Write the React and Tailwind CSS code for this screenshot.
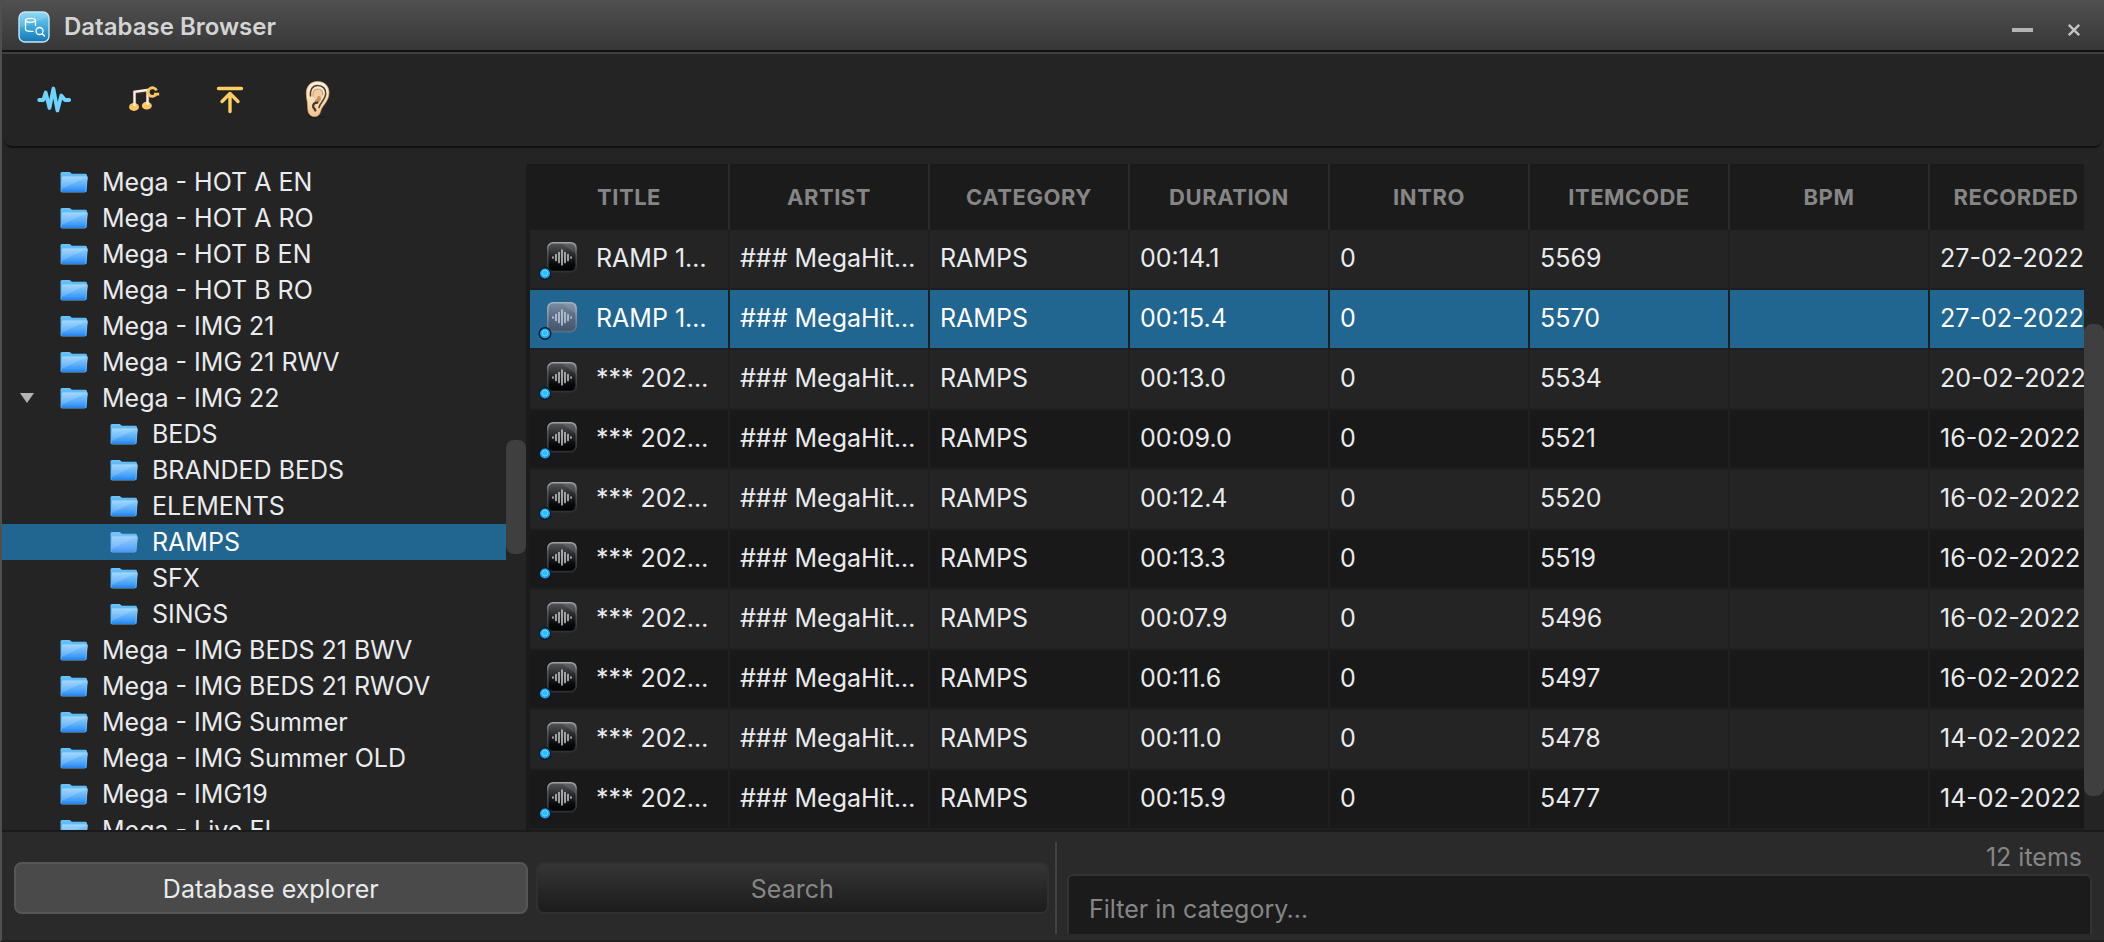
import { useState } from "react";

const folders = [
  { name: "Mega - HOT A EN" },
  { name: "Mega - HOT A RO" },
  { name: "Mega - HOT B EN" },
  { name: "Mega - HOT B RO" },
  { name: "Mega - IMG 21" },
  { name: "Mega - IMG 21 RWV" },
  { name: "Mega - IMG 22", open: true },
  { name: "BEDS", child: true },
  { name: "BRANDED BEDS", child: true },
  { name: "ELEMENTS", child: true },
  { name: "RAMPS", child: true },
  { name: "SFX", child: true },
  { name: "SINGS", child: true },
  { name: "Mega - IMG BEDS 21 BWV" },
  { name: "Mega - IMG BEDS 21 RWOV" },
  { name: "Mega - IMG Summer" },
  { name: "Mega - IMG Summer OLD" },
  { name: "Mega - IMG19" },
  { name: "Mega - Live EL" },
];

const columns = [
  "TITLE",
  "ARTIST",
  "CATEGORY",
  "DURATION",
  "INTRO",
  "ITEMCODE",
  "BPM",
  "RECORDED",
];

const items = [
  { title: "RAMP 1…", duration: "00:14.1", code: "5569", recorded: "27-02-2022" },
  { title: "RAMP 1…", duration: "00:15.4", code: "5570", recorded: "27-02-2022" },
  { title: "*** 202…", duration: "00:13.0", code: "5534", recorded: "20-02-2022" },
  { title: "*** 202…", duration: "00:09.0", code: "5521", recorded: "16-02-2022" },
  { title: "*** 202…", duration: "00:12.4", code: "5520", recorded: "16-02-2022" },
  { title: "*** 202…", duration: "00:13.3", code: "5519", recorded: "16-02-2022" },
  { title: "*** 202…", duration: "00:07.9", code: "5496", recorded: "16-02-2022" },
  { title: "*** 202…", duration: "00:11.6", code: "5497", recorded: "16-02-2022" },
  { title: "*** 202…", duration: "00:11.0", code: "5478", recorded: "14-02-2022" },
  { title: "*** 202…", duration: "00:15.9", code: "5477", recorded: "14-02-2022" },
];

const Gradients = () => (
  <svg className="absolute size-0" aria-hidden="true">
    <defs>
      <linearGradient id="appBg" x1="0" y1="0" x2="0" y2="1">
        <stop offset="0" stopColor="#7fd3f7" />
        <stop offset="0.5" stopColor="#3fa9dc" />
        <stop offset="1" stopColor="#1577b4" />
      </linearGradient>
      <linearGradient id="folderBack" x1="0" y1="0" x2="0" y2="1">
        <stop offset="0" stopColor="#6cc6fb" />
        <stop offset="1" stopColor="#1580e6" />
      </linearGradient>
      <linearGradient id="folderFront" x1="0" y1="0" x2="0" y2="1">
        <stop offset="0" stopColor="#8fd0fb" />
        <stop offset="0.5" stopColor="#5db0fa" />
        <stop offset="0.85" stopColor="#3795f6" />
        <stop offset="1" stopColor="#0f72dc" />
      </linearGradient>
      <linearGradient id="tile" x1="0" y1="0" x2="0" y2="1">
        <stop offset="0" stopColor="#55565a" />
        <stop offset="0.45" stopColor="#242527" />
        <stop offset="0.75" stopColor="#08090a" />
        <stop offset="1" stopColor="#030303" />
      </linearGradient>
      <linearGradient id="tileOn" x1="0" y1="0" x2="0" y2="1">
        <stop offset="0" stopColor="#7b8a9f" />
        <stop offset="0.5" stopColor="#586a80" />
        <stop offset="1" stopColor="#42536a" />
      </linearGradient>
      <linearGradient id="tileEdge" x1="0" y1="0" x2="0" y2="1">
        <stop offset="0" stopColor="#a3a4a8" />
        <stop offset="0.3" stopColor="#55565a" />
        <stop offset="1" stopColor="#303134" />
      </linearGradient>
      <linearGradient id="tileOnEdge" x1="0" y1="0" x2="0" y2="1">
        <stop offset="0" stopColor="#a4b0c0" />
        <stop offset="1" stopColor="#5c6d84" />
      </linearGradient>
      <linearGradient id="earSkin" x1="0" y1="0" x2="0" y2="1">
        <stop offset="0" stopColor="#fdf1de" />
        <stop offset="0.5" stopColor="#fbdfba" />
        <stop offset="1" stopColor="#f3c28f" />
      </linearGradient>
    </defs>
  </svg>
);

const AppIcon = () => (
  <svg className="size-8" viewBox="0 0 32 32" fill="none" aria-hidden="true">
    <rect x="1" y="1" width="30" height="30" rx="6" fill="url(#appBg)" stroke="#c3e6f6" strokeWidth="1.4" />
    <path d="M2 17 30 6V7a5 5 0 0 0-5-5H7a5 5 0 0 0-5 5z" fill="#fff" fillOpacity="0.14" />
    <g stroke="#fff" strokeWidth="1.3" strokeLinecap="round">
      <ellipse cx="12.5" cy="9.3" rx="5" ry="2" />
      <path d="M7.5 9.300v9c0 1.200 2.200 2 5 2h2.500M17.500 9.300v5.200" />
      <circle cx="21.500" cy="20" r="3.500" />
      <path d="m24.200 22.700 2.300 2.300" />
    </g>
  </svg>
);

const FolderIcon = ({ active }) => (
  <svg className="h-6 w-7 shrink-0" viewBox="0 0 28 24" aria-hidden="true">
    <path d="M.5 3.500A1.500 1.500 0 0 1 2 2h7.500c1 0 1.500 1.800 3 1.800h13a1.500 1.500 0 0 1 1.500 1.500v15.200a1.500 1.500 0 0 1-1.500 1.500H2a1.500 1.500 0 0 1-1.500-1.500z" fill="url(#folderBack)" />
    <path d="M3 6.500h23.600a1 1 0 0 1 1 1.200l-1.800 13.300a1.400 1.400 0 0 1-1.400 1.200H2.200A1.300 1.300 0 0 1 1 20.800L2 7.400a1 1 0 0 1 1-.9z" fill="url(#folderFront)" stroke="#a5dcfb" strokeOpacity="0.6" strokeWidth="0.7" />
    <path d="M2.300 7h24L2 19z" fill="#fff" fillOpacity="0.16" />
    {active && <path d="M1 3h8l3 2h15l-2 17H1z" fill="#a9c6ff" fillOpacity="0.3" />}
  </svg>
);

const TrackIcon = ({ active }) => (
  <svg className="size-11 shrink-0" viewBox="0 0 44 44" aria-hidden="true">
    <rect
      x="11.800"
      y="5.800"
      width="28.400"
      height="28.800"
      rx="5.500"
      fill={active ? "url(#tileOn)" : "url(#tile)"}
      stroke={active ? "url(#tileOnEdge)" : "url(#tileEdge)"}
      strokeWidth="1.600"
    />
    <path d="M26 6.500 40 6.500V17z" fill="#fff" fillOpacity="0.1" />
    <g stroke={active ? "#b9c6d6" : "#b9babd"} strokeWidth="1.700" strokeLinecap="round">
      <path d="M17 20v1M20 17.500v6M23 15.500v10M26 13.200v14.600M29 15.500v10M32 17.500v6M35 20v1" />
    </g>
    <circle cx="9" cy="36.500" r="6.500" fill="#0d1a26" />
    <circle cx="9" cy="36.500" r="5" fill="#1fa2f6" />
    <circle cx="9" cy="36" r="3" fill="#29c0fd" stroke="#6fd8ff" strokeWidth="0.900" />
  </svg>
);

const WaveIcon = () => (
  <svg className="size-10" viewBox="0 0 40 40" fill="none" stroke="#6fd3ff" strokeWidth="3.800" strokeLinecap="round" strokeLinejoin="round" aria-hidden="true">
    <path d="M5.200 20H9.300l2.400-7.500 3.800 15.500L19.400 8.500l4 22 3.900-15 3.700 4.500h4.200" />
  </svg>
);

const MusicIcon = () => (
  <svg className="size-10" viewBox="2 0 40 40" fill="none" aria-hidden="true">
    <path d="M14.500 26V12.500L28 10.800V25" stroke="#7a3f22" strokeWidth="3.600" strokeOpacity="0.500" />
    <ellipse cx="14" cy="27" rx="5" ry="3.900" fill="#fdc65f" />
    <ellipse cx="26.800" cy="25.700" rx="5" ry="3.900" fill="#fdc65f" />
    <path d="M14.500 26V11.800L27.500 10V25" stroke="#f6efe9" strokeWidth="2.400" />
    <path d="M36.500 10.500a4.300 4.300 0 1 0-.6 4.200M34 14.200h5.200" stroke="#fdc65f" strokeWidth="2.800" />
  </svg>
);

const UploadIcon = () => (
  <svg className="size-10" viewBox="0 0 40 40" fill="none" stroke="#ffcd62" strokeWidth="3.400" strokeLinecap="round" strokeLinejoin="round" aria-hidden="true">
    <path d="M8.500 8.500h23M20 31.500V14M12 21.500l8-8 8 8" />
  </svg>
);

const EarIcon = () => (
  <svg className="size-10" viewBox="0 0 40 40" fill="none" aria-hidden="true">
    <ellipse cx="19" cy="37" rx="9" ry="1.500" fill="#1f1f1f" />
    <path d="M19.500 1.500C12 1.500 8 7 8.300 14c.2 5 1.300 7.500 1.300 11.500 0 5 .6 11 7 11 4.500 0 5.400-3 6.400-6.500C24.500 25.500 31 21 31 12.500c0-6.500-4.500-11-11.500-11z" fill="url(#earSkin)" stroke="#dba877" strokeWidth="0.700" />
    <path d="M12.500 16c-.8-6 2-10.500 7-10.500 5.500 0 8.500 3.500 8.200 8.500-.4 6-5.700 8.500-6.700 13.500" stroke="#51402f" strokeWidth="1.500" strokeLinecap="round" />
    <path d="M15.500 17c-.9-5 .5-8.200 4-8.200 4 0 5.700 2.500 5.300 6-.5 4-4.300 5.200-5.800 9.200" fill="#f1cda2" />
    <path d="M15 16.500c-.6-4.500 1-7.500 4.500-7.500 4 0 5.500 2.500 5.200 5.700" stroke="#c99e70" strokeWidth="1.100" strokeLinecap="round" />
    <path d="M20 16c3.500-.5 4 4 1 6-1-2-2.800-1-4.500.5 0-2.500 2.500-3 3.500-6.500z" fill="#c6925d" />
    <path d="M19.500 22.500c-3 0-5 2-4.200 4.700.5 1.500 2 2 2 3.300" stroke="#43362a" strokeWidth="2.300" strokeLinecap="round" />
  </svg>
);

const toolbar = [
  { label: "Edit audio", Icon: WaveIcon },
  { label: "Edit item", Icon: MusicIcon },
  { label: "Insert on top", Icon: UploadIcon },
  { label: "Prelisten", Icon: EarIcon },
];

// top and size are fractions of the track
const Scrollbar = ({ top, size }) => (
  <div className="relative w-5 shrink-0">
    <div
      className="absolute inset-x-0 rounded-lg bg-[#3f3f3f]"
      style={{ top: `${top * 100}%`, height: `${size * 100}%` }}
    />
  </div>
);

const cellClass = "h-[60px] border-r-2 border-b-2 border-[#1f1f1f] px-[10px] pb-0.5 whitespace-nowrap";

const App = () => {
  const [folder, setFolder] = useState("RAMPS");
  const [selected, setSelected] = useState(1);
  const [filter, setFilter] = useState("");

  return (
    <div className="flex h-screen flex-col overflow-hidden border-b-2 border-l-2 border-b-[#222222] border-l-[#4f4f4f] bg-[#242424] font-['Inter',sans-serif] text-[25px] leading-9 text-[#e9ebee]">
      <Gradients />

      <header className="flex h-[54px] shrink-0 items-center border-b-2 border-[#3f3f3f] bg-[#121212] pb-0.5">
        <div className="flex h-full w-full items-center bg-linear-to-b from-[#505050] to-[#373737] pt-1 pl-4">
          <AppIcon />
          <h1 className="ml-3.5 text-2xl font-semibold text-[#d4d4d4]">Database Browser</h1>
          <button type="button" aria-label="Minimise" className="ml-auto flex h-10 w-10 items-center justify-center">
            <span className="mt-1.5 h-1 w-[21px] bg-[#b4b4b4]" />
          </button>
          <button type="button" aria-label="Close" className="mr-2.5 ml-3 flex h-10 w-10 items-center justify-center">
            <svg className="mt-1.5 size-3" viewBox="0 0 12 12" stroke="#c4c4c4" strokeWidth="2.400" aria-hidden="true">
              <path d="M.8.8l10.400 10.400M11.200.8.8 11.200" />
            </svg>
          </button>
        </div>
      </header>

      <div className="mx-0.5 flex h-[94px] shrink-0 rounded-b-lg border-b-2 border-[#121212] pl-1.5">
        {toolbar.map(({ label, Icon }) => (
          <button
            key={label}
            type="button"
            aria-label={label}
            className="flex w-[88px] items-center justify-center"
          >
            <Icon />
          </button>
        ))}
      </div>

      <main className="flex min-h-0 flex-1 border-b-2 border-[#1a1a1a] pt-4">
        <ul className="w-1/4 max-w-[504px] shrink-0 grow overflow-hidden">
          {folders.map(({ name, child, open }) => (
            <li key={name}>
              <button
                type="button"
                onClick={() => setFolder(name)}
                className={`flex h-9 w-full items-center text-left ${
                  child ? "pl-[108px]" : open ? "pl-[18px]" : "pl-[58px]"
                } ${folder === name ? "bg-[#206690] text-white" : ""}`}
              >
                {open && (
                  <svg className="mr-[26px] h-[10px] w-[14px]" viewBox="0 0 14 10" fill="#b4b4b4" aria-hidden="true">
                    <path d="M0 0h14L7 10z" />
                  </svg>
                )}
                <FolderIcon active={folder === name} />
                <span className="ml-3.5 whitespace-nowrap">{name}</span>
              </button>
            </li>
          ))}
        </ul>
        <Scrollbar top={0.414} size={0.171} />

        <div className="min-w-0 flex-1 overflow-hidden bg-[#1b1b1b] pl-1">
          <table className="w-[1574px] table-fixed border-separate border-spacing-0">
            <colgroup>
              {columns.map((column) => (
                <col key={column} className={column === "RECORDED" ? "w-[174px]" : "w-[200px]"} />
              ))}
            </colgroup>
            <thead>
              <tr>
                {columns.map((column) => (
                  <th
                    key={column}
                    className="h-[66px] border-r-2 border-[#2a2a2a] text-center text-[22px] font-bold tracking-wide text-[#868686]"
                  >
                    {column}
                  </th>
                ))}
              </tr>
            </thead>
            <tbody>
              {items.map((item, i) => (
                <tr
                  key={item.code}
                  onClick={() => setSelected(i)}
                  className={
                    selected === i
                      ? "bg-[#206690] text-white"
                      : i % 2
                        ? "bg-[#191919]"
                        : "bg-[#242424]"
                  }
                >
                  <td className="h-[60px] border-r-2 border-b-2 border-[#1f1f1f] pl-1.5">
                    <div className="flex items-center gap-4">
                      <TrackIcon active={selected === i} />
                      <span className="pb-0.5 whitespace-nowrap">{item.title}</span>
                    </div>
                  </td>
                  <td className={cellClass}>### MegaHit…</td>
                  <td className={cellClass}>RAMPS</td>
                  <td className={cellClass}>{item.duration}</td>
                  <td className={cellClass}>0</td>
                  <td className={cellClass}>{item.code}</td>
                  <td className={cellClass}></td>
                  <td className={cellClass}>{item.recorded}</td>
                </tr>
              ))}
            </tbody>
          </table>
        </div>
        <Scrollbar top={0.24} size={0.709} />
      </main>

      <footer className="flex h-[108px] shrink-0 bg-[#2a2a2a]">
        <div className="flex w-1/2 items-center gap-2 pt-1 pr-1 pl-3">
          <button
            type="button"
            className="h-[52px] flex-1 rounded-lg border-2 border-[#565656] bg-[#4a4a4a] pt-0.5"
          >
            Database explorer
          </button>
          <button
            type="button"
            className="h-[52px] flex-1 rounded-lg border-2 border-[#303030] bg-linear-to-b from-[#353535] to-[#1c1c1c] pt-0.5 text-[#868686]"
          >
            Search
          </button>
        </div>
        <div className="mt-2.5 mb-1.5 ml-0.5 flex-1 overflow-hidden border-l-2 border-[#424242] pr-3 pl-2.5">
          <p className="h-8 pr-2.5 text-right leading-[30px] text-[#868686]">12 items</p>
          <input
            type="text"
            aria-label="Filter in category"
            placeholder="Filter in category…"
            value={filter}
            onChange={(e) => setFilter(e.target.value)}
            className="h-[68px] w-full rounded-md border-2 border-[#333333] bg-[#1b1b1b] px-5 pt-0.5 outline-none placeholder:text-[#868686]"
          />
        </div>
      </footer>
    </div>
  );
};

export default App;
